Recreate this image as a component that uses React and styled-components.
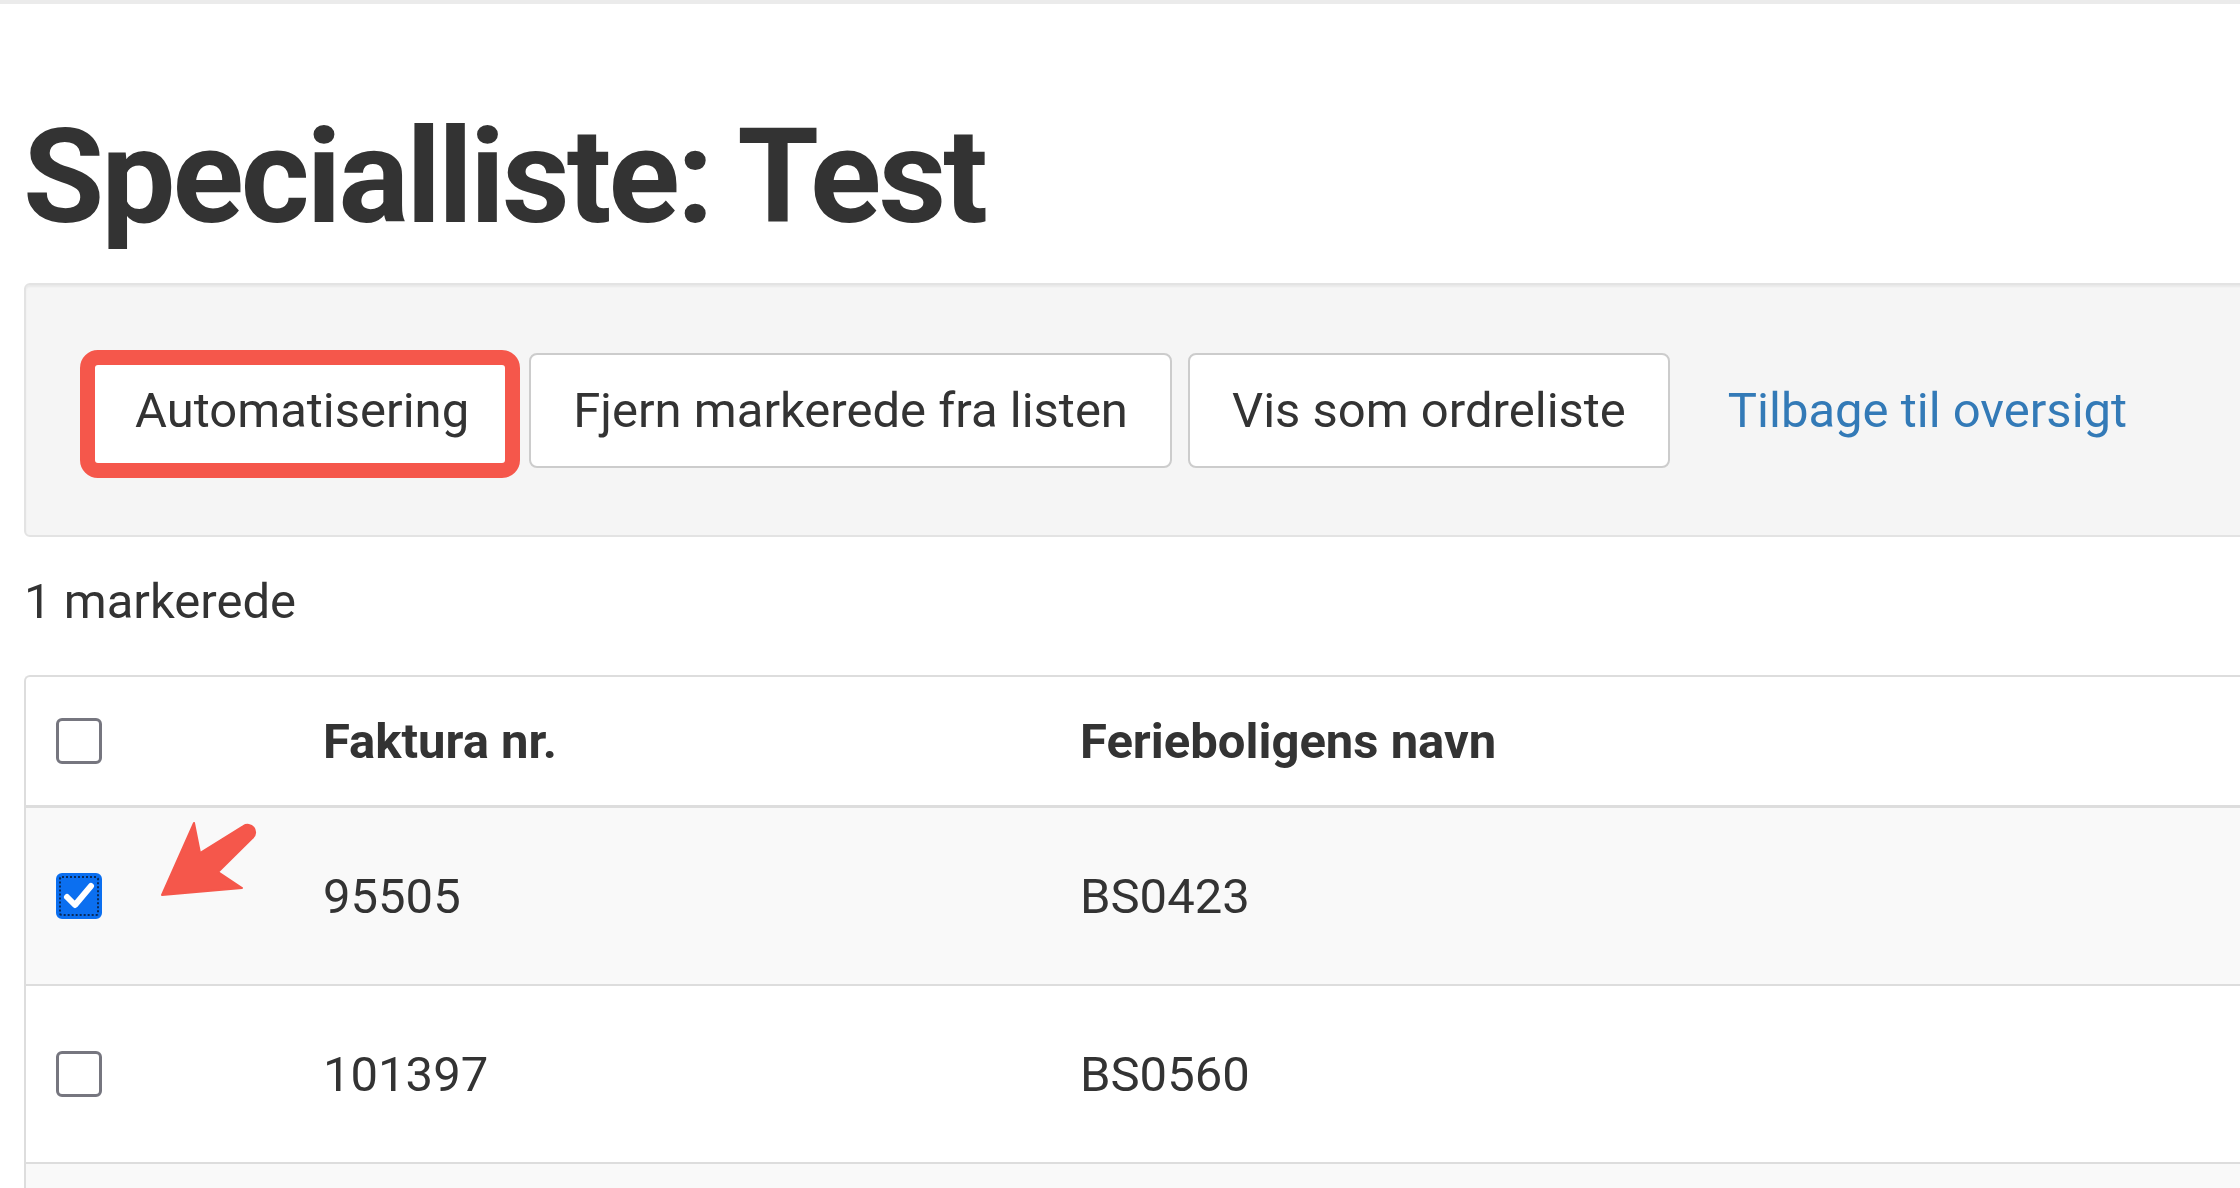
import React from 'react';
import styled, { createGlobalStyle } from 'styled-components';

const GlobalStyle = createGlobalStyle`
    * {
        box-sizing: border-box;
    }
    html,
    body {
        margin: 0;
        padding: 0;
        background: #fff;
        overflow: hidden;
    }
    body {
        font-family: Roboto, 'Liberation Sans', Arial, sans-serif;
        color: #333;
    }
`;

const ROWS = [
    { invoice: '95505', name: 'BS0423', checked: true },
    { invoice: '101397', name: 'BS0560', checked: false },
    { invoice: '', name: '', checked: false, empty: true },
];

function Checkbox({ checked }) {
    return (
        <Box $checked={checked}>
            {checked && (
                <svg width="46" height="46" viewBox="0 0 46 46">
                    <polyline
                        points="11,24 19,32 35,13"
                        fill="none"
                        stroke="#fff"
                        strokeWidth="6"
                        strokeLinecap="round"
                        strokeLinejoin="round"
                    />
                </svg>
            )}
        </Box>
    );
}

function Arrow() {
    return (
        <ArrowMark width="120" height="100" viewBox="0 0 120 100">
            <path
                d="M12 85 L44 13 L50 43 L93.4 16.1 A7.5 7.5 0 0 1 102.6 27.9 L68 62 L92 78 Z"
                fill="#f5574b"
                stroke="#f5574b"
                strokeWidth="2"
                strokeLinejoin="round"
            />
        </ArrowMark>
    );
}

function App() {
    return (
        <>
            <GlobalStyle />
            <TopBar />
            <Page>
                <Title>Specialliste: Test</Title>
                <Toolbar>
                    <Button $marked>Automatisering</Button>
                    <Button>Fjern markerede fra listen</Button>
                    <Button>Vis som ordreliste</Button>
                    <BackLink href="#">Tilbage til oversigt</BackLink>
                </Toolbar>
                <Count>1 markerede</Count>
                <Table>
                    <HeadRow>
                        <Cell>
                            <Checkbox />
                        </Cell>
                        <Cell>Faktura nr.</Cell>
                        <Cell>Ferieboligens navn</Cell>
                    </HeadRow>
                    {ROWS.map((row, i) => (
                        <Row key={i} $striped={i % 2 === 0}>
                            <Cell>{!row.empty && <Checkbox checked={row.checked} />}</Cell>
                            <Cell>{row.invoice}</Cell>
                            <Cell>{row.name}</Cell>
                        </Row>
                    ))}
                    <Arrow />
                </Table>
            </Page>
        </>
    );
}

const TopBar = styled.div`
    height: 4px;
    background: #ebebeb;
`;

const Page = styled.main`
    width: calc(100% + 80px);
    padding-left: 24px;
`;

const Title = styled.h1`
    margin: 107px 0 40px -1px;
    font-size: 132px;
    line-height: 132px;
    font-weight: 700;
    letter-spacing: -3px;
    color: #333;
`;

const Toolbar = styled.div`
    display: flex;
    align-items: center;
    gap: 16px;
    padding: 68px 65px 67px 65px;
    background: #f5f5f5;
    border: 2px solid #e3e3e3;
    border-radius: 6px;
    box-shadow: inset 0 2px 2px rgba(0, 0, 0, 0.05);
`;

const Button = styled.button`
    position: relative;
    display: inline-flex;
    align-items: center;
    height: 115px;
    padding: 0 42px;
    background: #fff;
    border: 2px solid #ccc;
    border-radius: 8px;
    font-family: inherit;
    font-size: 49px;
    color: #333;
    white-space: nowrap;
    cursor: pointer;

    ${(p) =>
        p.$marked &&
        `
        &::after {
            content: '';
            position: absolute;
            top: -5px;
            left: -13px;
            right: -9px;
            bottom: -12px;
            border: 15px solid #f5574b;
            border-radius: 18px;
        }
    `}
`;

const BackLink = styled.a`
    padding: 0 42px;
    font-size: 49px;
    color: #337ab7;
    text-decoration: none;
    white-space: nowrap;
`;

const Count = styled.p`
    margin: 31px 0 39px;
    font-size: 49px;
    line-height: 68px;
`;

const Table = styled.div`
    position: relative;
    border-top: 2px solid #ddd;
    border-left: 2px solid #ddd;
    border-top-left-radius: 6px;
`;

const HeadRow = styled.div`
    display: grid;
    grid-template-columns: 267px 757px 1fr;
    align-items: center;
    height: 131px;
    border-bottom: 3px solid #ddd;
    font-weight: 700;
`;

const Row = styled(HeadRow)`
    height: 178px;
    border-bottom: 2px solid #ddd;
    font-weight: 400;
    background: ${(p) => (p.$striped ? '#f9f9f9' : '#fff')};
`;

const Cell = styled.div`
    display: flex;
    align-items: center;
    padding-left: 30px;
    font-size: 49px;
    line-height: 1;
    white-space: nowrap;
`;

const Box = styled.span`
    display: inline-block;
    width: 46px;
    height: 46px;
    border: 3px solid ${(p) => (p.$checked ? '#0b6ff0' : '#76767f')};
    border-radius: 6px;
    background: ${(p) => (p.$checked ? '#0b6ff0' : '#fff')};
    outline: ${(p) => (p.$checked ? '2px dotted rgba(10, 20, 40, 0.75)' : 'none')};
    outline-offset: -5px;

    & svg {
        display: block;
        margin: -3px;
    }
`;

const ArrowMark = styled.svg`
    position: absolute;
    left: 124px;
    top: 133px;
    pointer-events: none;
`;

export default App;
